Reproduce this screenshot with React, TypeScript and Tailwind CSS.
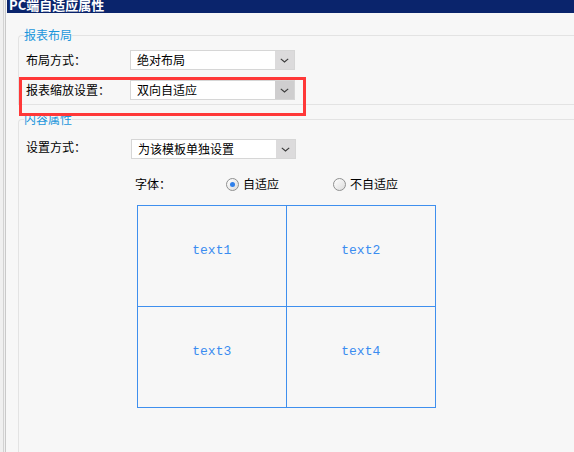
import React from 'react';

function Chevron() {
  return (
    <svg width="9" height="5" viewBox="0 0 9 5" fill="none">
      <path d="M0.8 0.8 L4.5 4 L8.2 0.8" stroke="#3a3a3a" strokeWidth="1.1" />
    </svg>
  );
}

function Select({ value, active }: { value: string; active?: boolean }) {
  return (
    <div className="w-[165px] h-[20px] bg-white border border-[#d6d6d6] flex">
      <span className="flex-1 pl-[6px] text-[12px] leading-[18px] text-black">{value}</span>
      <div
        className={`w-[19px] h-full flex items-center justify-center ${
          active ? 'bg-[#cfcecf]' : 'bg-[#dcdbdc]'
        }`}
      >
        <Chevron />
      </div>
    </div>
  );
}

function Radio({ checked, label }: { checked?: boolean; label: string }) {
  return (
    <div className="flex items-center gap-[4px]">
      <div className="w-[13px] h-[13px] rounded-full border border-[#8f9090] bg-gradient-to-br from-[#ffffff] to-[#dcdcdc] flex items-center justify-center">
        {checked && <div className="w-[5px] h-[5px] rounded-full bg-[#2f7fea]" />}
      </div>
      <span className="text-[12px] leading-[14px] text-black">{label}</span>
    </div>
  );
}

export default function App() {
  const cells = ['text1', 'text2', 'text3', 'text4'];

  return (
    <div className="relative w-[574px] h-[452px] overflow-hidden bg-[#f7f7f7] flex font-['Noto_Sans_CJK_SC',sans-serif]">
      {/* left edge */}
      <div className="w-[7px] shrink-0 flex">
        <div className="w-[3px] bg-[#efefef]" />
        <div className="w-[1px] bg-[#d2d2d2]" />
        <div className="w-[1px] bg-[#f0f0f0]" />
        <div className="w-[1px] bg-[#c9c9c9]" />
        <div className="w-[1px] bg-[#f7f7f7]" />
      </div>

      <div className="flex-1 min-w-0 flex flex-col">
        {/* title bar */}
        <div className="h-[13px] bg-[#0a246c] overflow-hidden shrink-0">
          <div className="-mt-[3px] pl-[2px] text-[13px] leading-[16px] font-bold text-white">PC端自适应属性</div>
        </div>

        {/* 报表布局 */}
        <fieldset className="mt-[14px] ml-[11px] border border-r-0 border-[#e3e3e3] rounded-tl-[4px] pl-[7px] pt-[7px] pb-[4px]">
          <legend className="-ml-[2px] p-0 text-[12px] leading-[16px] text-[#1b96dc]">报表布局</legend>
          <div className="flex items-center h-[20px]">
            <span className="w-[104px] text-[12px] leading-[14px] text-black">布局方式：</span>
            <Select value="绝对布局" />
          </div>
          <div className="flex items-center h-[20px] mt-[10px]">
            <span className="w-[104px] text-[12px] leading-[14px] text-black">报表缩放设置：</span>
            <Select value="双向自适应" active />
          </div>
        </fieldset>

        {/* 内容属性 */}
        <fieldset className="flex-1 mt-[6px] ml-[11px] border border-r-0 border-b-0 border-[#e3e3e3] rounded-tl-[4px] pl-[7px] pt-[12px]">
          <legend className="-ml-[2px] p-0 text-[12px] leading-[16px] text-[#1b96dc]">内容属性</legend>
          <div className="flex items-start">
            <span className="w-[105px] pt-[1px] text-[12px] leading-[14px] text-black">设置方式：</span>
            <Select value="为该模板单独设置" />
          </div>

          <div className="mt-[17px] ml-[109px] flex items-center h-[16px]">
            <span className="w-[91px] text-[12px] leading-[14px] text-black">字体：</span>
            <div className="w-[107px]">
              <Radio checked label="自适应" />
            </div>
            <Radio label="不自适应" />
          </div>

          <div className="mt-[13px] ml-[111px] w-[299px] h-[203px] border border-[#3f8fee] grid grid-cols-2 grid-rows-2">
            {cells.map((c, i) => (
              <div
                key={c}
                className={`flex items-center justify-center pb-[10px] border-[#3f8fee] ${
                  i % 2 === 0 ? 'border-r' : ''
                } ${i < 2 ? 'border-b' : ''}`}
              >
                <span className="font-['Liberation_Mono',monospace] text-[13px] leading-[16px] text-[#3a8cf0]">{c}</span>
              </div>
            ))}
          </div>
        </fieldset>
      </div>

      {/* annotation */}
      <div className="absolute left-[19px] top-[77px] w-[287px] h-[39px] border-[3px] border-[#ff3838]" />
    </div>
  );
}
